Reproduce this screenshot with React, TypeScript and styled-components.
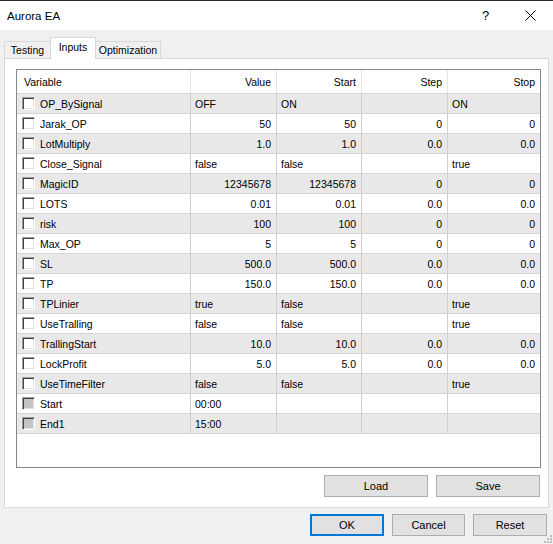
import React from "react";
import styled, { createGlobalStyle, css } from "styled-components";

const Global = createGlobalStyle`
  html, body { margin: 0; padding: 0; background: #f0f0f0; }
  body { font-family: "Liberation Sans", Arial, sans-serif; font-size: 10.5px; color: #000; }
  #root { width: 553px; height: 544px; }
`;

const Window = styled.div`
  width: 553px;
  height: 544px;
  display: flex;
  flex-direction: column;
  background: #f0f0f0;
  position: relative;
  overflow: hidden;
`;

const TitleBar = styled.div`
  height: 29px;
  border-top: 1px solid #2b2b2b;
  background: #fff;
  display: flex;
  align-items: center;
  padding-left: 7px;
  font-size: 11.5px;
`;

const TitleText = styled.div`
  flex: 1;
`;

const TitleButton = styled.div`
  width: 45px;
  height: 29px;
  display: flex;
  align-items: center;
  justify-content: center;
  font-size: 13px;
`;

const Body = styled.div`
  flex: 1;
  display: flex;
  flex-direction: column;
  padding: 8px 4px 0 4px;
`;

const TabStrip = styled.div`
  display: flex;
  align-items: flex-end;
  height: 20px;
  padding-left: 1px;
  position: relative;
  z-index: 1;
`;

const Tab = styled.div<{ $active?: boolean; $w: number }>`
  width: ${(p) => p.$w}px;
  height: 17px;
  border: 1px solid #d9d9d9;
  border-bottom: none;
  box-sizing: border-box;
  display: flex;
  align-items: center;
  justify-content: center;
  background: #f0f0f0;
  margin-left: -1px;
  ${(p) =>
    p.$active &&
    css`
      height: 22px;
      background: #fff;
      margin-bottom: -1px;
      padding-bottom: 4px;
      position: relative;
      z-index: 2;
    `}
`;

const Panel = styled.div`
  width: 545px;
  height: 450px;
  box-sizing: border-box;
  border: 1px solid #d9d9d9;
  background: #fff;
  display: flex;
  flex-direction: column;
  padding: 10px 8px 10px 11px;
`;

const Table = styled.div`
  width: 525px;
  height: 399px;
  box-sizing: border-box;
  border: 1px solid #828790;
  background: #fff;
  display: flex;
  flex-direction: column;
`;

const GRID = "174px 86px 85px 86px 1fr";

const HeaderRow = styled.div`
  display: grid;
  grid-template-columns: ${GRID};
  height: 24px;
  box-sizing: border-box;
  border-bottom: 1px solid #d5d5d5;
`;

const HeaderCell = styled.div<{ $left?: boolean }>`
  display: flex;
  align-items: center;
  justify-content: ${(p) => (p.$left ? "flex-start" : "flex-end")};
  padding: 0 ${(p) => (p.$left ? "0 0 7px" : "5px 0 0")};
  border-right: 1px solid #e5e5e5;
  &:last-child { border-right: none; }
`;

const Row = styled.div<{ $shade: boolean }>`
  display: grid;
  grid-template-columns: ${GRID};
  height: 20px;
  box-sizing: border-box;
  border-bottom: 1px solid #d5d5d5;
  background: ${(p) => (p.$shade ? "#e8e8e8" : "#fff")};
`;

const Cell = styled.div<{ $right?: boolean }>`
  display: flex;
  align-items: center;
  justify-content: ${(p) => (p.$right ? "flex-end" : "flex-start")};
  padding: ${(p) => (p.$right ? "0 5px 0 0" : "0 0 0 4px")};
  border-right: 1px solid #d0d0d0;
  white-space: nowrap;
  &:last-child { border-right: none; }
`;

const NameCell = styled.div`
  display: flex;
  align-items: center;
  gap: 5px;
  padding-left: 5px;
  border-right: 1px solid #d0d0d0;
`;

const Check = styled.span<{ $disabled?: boolean }>`
  width: 13px;
  height: 13px;
  box-sizing: border-box;
  border-style: solid;
  border-width: 1px;
  border-color: #a0a0a0 #ffffff #ffffff #a0a0a0;
  box-shadow: inset 1px 1px 0 #404040, inset -1px -1px 0 #e3e3e3;
  background: ${(p) => (p.$disabled ? "#c4c4c4" : "#fff")};
  flex: none;
`;

const Spacer = styled.div`
  flex: 1;
`;

const ButtonRow = styled.div<{ $pad?: string }>`
  display: flex;
  justify-content: flex-end;
  gap: 8px;
  padding: ${(p) => p.$pad || "0"};
`;

const Button = styled.button<{ $w: number; $default?: boolean }>`
  width: ${(p) => p.$w}px;
  height: 22px;
  box-sizing: border-box;
  background: #e1e1e1;
  border: 1px solid #adadad;
  font-family: "Liberation Sans", Arial, sans-serif;
  font-size: 11px;
  color: #000;
  padding: 0;
  ${(p) =>
    p.$default &&
    css`
      border: 2px solid #0078d7;
    `}
`;

const Grip = styled.svg`
  position: absolute;
  right: 1px;
  bottom: 1px;
`;

type R = { name: string; v: string; s: string; st: string; sp: string; num?: boolean; dis?: boolean };

const rows: R[] = [
  { name: "OP_BySignal", v: "OFF", s: "ON", st: "", sp: "ON" },
  { name: "Jarak_OP", v: "50", s: "50", st: "0", sp: "0", num: true },
  { name: "LotMultiply", v: "1.0", s: "1.0", st: "0.0", sp: "0.0", num: true },
  { name: "Close_Signal", v: "false", s: "false", st: "", sp: "true" },
  { name: "MagicID", v: "12345678", s: "12345678", st: "0", sp: "0", num: true },
  { name: "LOTS", v: "0.01", s: "0.01", st: "0.0", sp: "0.0", num: true },
  { name: "risk", v: "100", s: "100", st: "0", sp: "0", num: true },
  { name: "Max_OP", v: "5", s: "5", st: "0", sp: "0", num: true },
  { name: "SL", v: "500.0", s: "500.0", st: "0.0", sp: "0.0", num: true },
  { name: "TP", v: "150.0", s: "150.0", st: "0.0", sp: "0.0", num: true },
  { name: "TPLinier", v: "true", s: "false", st: "", sp: "true" },
  { name: "UseTralling", v: "false", s: "false", st: "", sp: "true" },
  { name: "TrallingStart", v: "10.0", s: "10.0", st: "0.0", sp: "0.0", num: true },
  { name: "LockProfit", v: "5.0", s: "5.0", st: "0.0", sp: "0.0", num: true },
  { name: "UseTimeFilter", v: "false", s: "false", st: "", sp: "true" },
  { name: "Start", v: "00:00", s: "", st: "", sp: "", dis: true },
  { name: "End1", v: "15:00", s: "", st: "", sp: "", dis: true },
];

export default function App() {
  return (
    <Window>
      <Global />
      <TitleBar>
        <TitleText>Aurora EA</TitleText>
        <TitleButton>?</TitleButton>
        <TitleButton>
          <svg width="11" height="11" viewBox="0 0 11 11">
            <path d="M0.5 0.5 L10.5 10.5 M10.5 0.5 L0.5 10.5" stroke="#000" strokeWidth="1" />
          </svg>
        </TitleButton>
      </TitleBar>
      <Body>
        <TabStrip>
          <Tab $w={47}>Testing</Tab>
          <Tab $w={46} $active>Inputs</Tab>
          <Tab $w={66}>Optimization</Tab>
        </TabStrip>
        <Panel>
          <Table>
            <HeaderRow>
              <HeaderCell $left>Variable</HeaderCell>
              <HeaderCell>Value</HeaderCell>
              <HeaderCell>Start</HeaderCell>
              <HeaderCell>Step</HeaderCell>
              <HeaderCell>Stop</HeaderCell>
            </HeaderRow>
            {rows.map((r, i) => (
              <Row key={r.name} $shade={i % 2 === 0}>
                <NameCell>
                  <Check $disabled={r.dis} />
                  {r.name}
                </NameCell>
                <Cell $right={r.num}>{r.v}</Cell>
                <Cell $right={r.num}>{r.s}</Cell>
                <Cell $right={r.num}>{r.st}</Cell>
                <Cell $right={r.num}>{r.sp}</Cell>
              </Row>
            ))}
          </Table>
          <Spacer />
          <ButtonRow>
            <Button $w={104}>Load</Button>
            <Button $w={104}>Save</Button>
          </ButtonRow>
        </Panel>
        <ButtonRow $pad="6px 2px 0 0">
          <Button $w={74} $default>OK</Button>
          <Button $w={73}>Cancel</Button>
          <Button $w={74}>Reset</Button>
        </ButtonRow>
      </Body>
      <Grip width="8" height="8" viewBox="0 0 8 8">
        {[
          [6, 0],
          [6, 3],
          [3, 3],
          [6, 6],
          [3, 6],
          [0, 6],
        ].map(([x, y], i) => (
          <rect key={i} x={x} y={y} width="2" height="2" fill="#bcbcbc" />
        ))}
      </Grip>
    </Window>
  );
}
